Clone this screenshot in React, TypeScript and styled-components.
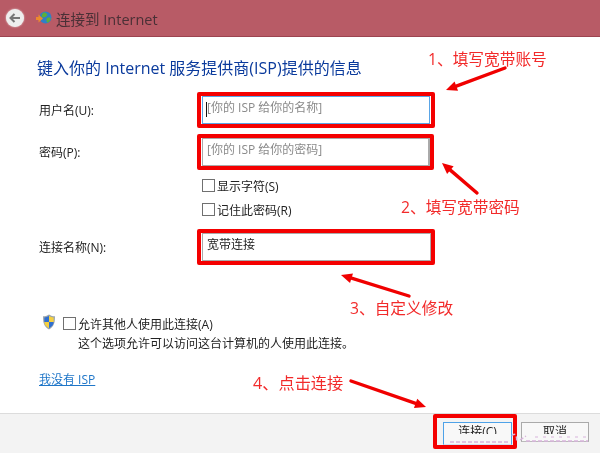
import React from "react";
import styled, { createGlobalStyle } from "styled-components";

const Global = createGlobalStyle`
  html, body { margin: 0; padding: 0; background: #fff; }
  #root { width: 600px; height: 453px; overflow: hidden; }
`;
const FONT = `"Open Sans", "Noto Sans CJK SC", sans-serif`;

const Page = styled.div`
  position: relative;
  width: 600px;
  height: 453px;
  display: flex;
  flex-direction: column;
  overflow: hidden;
  font-family: ${FONT};
  font-size: 12px;
  color: #222;
  background: #fff;
  filter: blur(0.3px);
`;
const TitleBar = styled.header`
  height: 36px;
  flex: none;
  display: flex;
  align-items: center;
  padding-left: 6px;
  background: #b85b66;
  border-bottom: 1px solid #9c4450;
`;
const BackButton = styled.div`
  width: 18px;
  height: 18px;
  border-radius: 50%;
  background: #eee;
  box-shadow: 0 0 2px rgba(255, 255, 255, 0.8);
  display: flex;
  align-items: center;
  justify-content: center;
  margin-right: 12px;
`;
const TitleText = styled.div`
  margin-left: 4px;
  font-size: 14.5px;
  color: #4a3036;
`;
const Content = styled.main`
  flex: 1;
  padding: 21px 0 0 37px;
  display: flex;
  flex-direction: column;
`;
const Heading = styled.h1`
  margin: 0 0 18px;
  font-size: 16px;
  line-height: 20px;
  font-weight: 400;
  color: #0a3a9c;
  white-space: nowrap;
`;
const FormGrid = styled.div`
  display: grid;
  grid-template-columns: 165px 228px;
  row-gap: 14px;
`;
const Label = styled.label`
  padding: 7px 0 0 2px;
  line-height: 16px;
  font-size: 12px;
`;
const FieldBox = styled.div<{ $active?: boolean; $wide?: boolean }>`
  position: relative;
  box-sizing: border-box;
  width: ${(p) => (p.$wide ? "230px" : "228px")};
  height: ${(p) => (p.$active ? "28px" : "29px")};
  padding: 3px 0 0 4px;
  line-height: 16px;
  font-size: 12px;
  color: #8a8a8a;
  white-space: nowrap;
  border: 1px solid ${(p) => (p.$active ? "#5aa5e6" : "#aaa")};
  border-right-width: ${(p) => (p.$active ? "1px" : "2px")};
  border-bottom-width: ${(p) => (p.$active ? "1px" : "2px")};
  &::after {
    content: "";
    position: absolute;
    inset: -5px ${(p) => (p.$wide ? "-5px" : "-6px")} -5px -6px;
    border: 4px solid #f40000;
    border-radius: 2px;
  }
`;
const FieldValue = styled.span`
  color: #222;
`;
const Caret = styled.span`
  position: absolute;
  left: 3px;
  top: 5px;
  width: 1px;
  height: 15px;
  background: #111;
`;
const CheckGroup = styled.div`
  grid-column: 2;
  display: flex;
  flex-direction: column;
  gap: 11px;
  margin: -2px 0 3px;
`;
const CheckRow = styled.div`
  display: flex;
  align-items: center;
  gap: 2px;
  height: 13px;
  font-size: 12px;
  white-space: nowrap;
`;
const Box = styled.span`
  box-sizing: border-box;
  width: 13px;
  height: 13px;
  flex: none;
  border: 1px solid #707070;
  background: #fff;
`;
const ShareBlock = styled.div`
  margin-top: 55px;
  display: grid;
  grid-template-columns: 26px 1fr;
  row-gap: 7px;
`;
const ShieldSlot = styled.div`
  height: 13px;
  margin-left: 5px;
  & > svg {
    display: block;
    margin-top: -3px;
  }
`;
const ShareHint = styled.div`
  grid-column: 2;
  padding-left: 15px;
  line-height: 14px;
  font-size: 12px;
`;
const IspLink = styled.a`
  margin: 22px 0 0 2px;
  align-self: flex-start;
  font-size: 12px;
  line-height: 14px;
  color: #1f76c8;
  text-decoration: underline;
`;
const Footer = styled.footer`
  height: 40px;
  flex: none;
  box-sizing: border-box;
  display: flex;
  justify-content: flex-end;
  align-items: flex-start;
  gap: 9px;
  padding: 8px 11px 0 0;
  background: #f3f3f3;
  border-top: 1px solid #dcdcdc;
`;
const DialogButton = styled.div<{ $primary?: boolean }>`
  position: relative;
  box-sizing: border-box;
  width: ${(p) => (p.$primary ? "69px" : "68px")};
  height: ${(p) => (p.$primary ? "23px" : "20px")};
  background: #f8f8f8;
  border: 1px solid ${(p) => (p.$primary ? "#4ea2e8" : "#aaa")};
  border-bottom-color: ${(p) => (p.$primary ? "#cfe3f5" : "#bbb")};
  text-align: center;
  font-size: 12px;
  line-height: 17px;
  color: #222;
  ${(p) =>
    p.$primary &&
    `&::after {
      content: "";
      position: absolute;
      left: -11px; right: -6px; top: -9px; bottom: -5px;
      border: 4px solid #f40000;
      border-radius: 2px;
    }`}
`;
const Clip = styled.span`
  display: block;
  height: 11px;
  overflow: hidden;
`;
const Overlay = styled.svg`
  position: absolute;
  inset: 0;
  pointer-events: none;
`;
const Note = styled.div<{ $x: number; $y: number; $size?: number }>`
  position: absolute;
  left: ${(p) => p.$x}px;
  top: ${(p) => p.$y}px;
  font-size: ${(p) => p.$size ?? 15.7}px;
  line-height: 20px;
  color: #f22a2a;
  white-space: nowrap;
`;

const arrows: [number, number, number, number][] = [
  [505, 68, 446, 90],
  [477, 193, 442, 163],
  [409, 296, 341, 275],
  [351, 381, 426, 407],
];

function Arrow({ a }: { a: [number, number, number, number] }) {
  const [x1, y1, x2, y2] = a;
  const angle = Math.atan2(y2 - y1, x2 - x1);
  const ca = Math.cos(angle);
  const sa = Math.sin(angle);
  const bx = x2 - ca * 11;
  const by = y2 - sa * 11;
  const pts = `${x2},${y2} ${bx - sa * 5},${by + ca * 5} ${bx + sa * 5},${by - ca * 5}`;
  return (
    <g>
      <path d={`M${x1} ${y1}L${bx} ${by}`} stroke="#f00000" strokeWidth="3.4" strokeLinecap="round" />
      <polygon points={pts} fill="#f00000" />
    </g>
  );
}

export default function App() {
  return (
    <Page>
      <Global />
      <TitleBar>
        <BackButton>
          <svg width="14" height="14" viewBox="0 0 14 14">
            <path d="M12 7H3M6.500 3 2.500 7l4 4" fill="none" stroke="#777" strokeWidth="2" />
          </svg>
        </BackButton>
        <svg width="16" height="14" viewBox="0 0 16 14">
          <circle cx="9.500" cy="6.500" r="6" fill="#2f7fc8" />
          <path d="M7 2c2-1 3 0 4 1s-1 3-2 3-2 1-3 0 0-3 1-4zM11 7c1.500-1 3-1 3.500 0s-1 4-2.500 4.500-2-3.500-1-4.500z" fill="#5cae3c" />
          <path d="M0 6h2.500V3.500L7 7.500 2.500 11.500V9H0z" fill="#ec8a2c" />
        </svg>
        <TitleText>连接到 Internet</TitleText>
      </TitleBar>
      <Content>
        <Heading>键入你的 Internet 服务提供商(ISP)提供的信息</Heading>
        <FormGrid>
          <Label>用户名(U):</Label>
          <FieldBox $active>
            <Caret />
            [你的 ISP 给你的名称]
          </FieldBox>
          <Label>密码(P):</Label>
          <FieldBox>[你的 ISP 给你的密码]</FieldBox>
          <CheckGroup>
            <CheckRow>
              <Box />
              显示字符(S)
            </CheckRow>
            <CheckRow>
              <Box />
              记住此密码(R)
            </CheckRow>
          </CheckGroup>
          <Label>连接名称(N):</Label>
          <FieldBox $wide>
            <FieldValue>宽带连接</FieldValue>
          </FieldBox>
        </FormGrid>
        <ShareBlock>
          <ShieldSlot>
            <svg width="14" height="16" viewBox="0 0 15 18">
              <path d="M7.500.5C5.500 2 3 2.500.8 2.500c0 6 .2 11 6.700 15 6.500-4 6.700-9 6.700-15C12 2.500 9.500 2 7.500.5z" fill="#9aa4ac" />
              <path d="M7.500 2.200C6 3.200 4 3.800 2.300 3.900V9h5.200z" fill="#2f6fd0" />
              <path d="M7.500 2.200C9 3.200 11 3.800 12.700 3.900V9H7.500z" fill="#f5d040" />
              <path d="M2.300 9c.2 3 1.500 5 5.200 7V9z" fill="#f5d040" />
              <path d="M12.700 9c-.2 3-1.500 5-5.200 7V9z" fill="#2f6fd0" />
            </svg>
          </ShieldSlot>
          <CheckRow>
            <Box />
            允许其他人使用此连接(A)
          </CheckRow>
          <ShareHint>这个选项允许可以访问这台计算机的人使用此连接。</ShareHint>
        </ShareBlock>
        <IspLink>我没有 ISP</IspLink>
      </Content>
      <Footer>
        <DialogButton $primary>
          <Clip>连接(C)</Clip>
        </DialogButton>
        <DialogButton>
          <Clip>取消</Clip>
        </DialogButton>
      </Footer>
      <Overlay width="600" height="453" viewBox="0 0 600 453">
        {arrows.map((a) => (
          <Arrow key={a[0]} a={a} />
        ))}
        <path
          d="M450 442H508M512 436c3-5 6 2 4 6M520 440l6-4M526 441H588"
          fill="none"
          stroke="#d8b4dc"
          strokeWidth="1.500"
          strokeDasharray="4 2"
        />
        <path d="M535 437H586" fill="none" stroke="#d8b4dc" strokeWidth="1" strokeDasharray="3 5" />
      </Overlay>
      <Note $x={428} $y={49}>1、填写宽带账号</Note>
      <Note $x={401} $y={197}>2、填写宽带密码</Note>
      <Note $x={350} $y={298}>3、自定义修改</Note>
      <Note $x={253} $y={373} $size={16.2}>4、点击连接</Note>
    </Page>
  );
}
